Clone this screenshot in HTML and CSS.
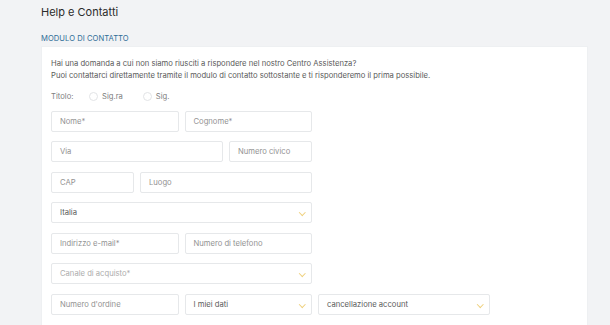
FILE: index.html
```html
<!DOCTYPE html>
<html lang="it">
<head>
<meta charset="utf-8">
<title>Help e Contatti</title>
<link rel="stylesheet" href="styles.css">
</head>
<body>
<main class="page">
  <h1 class="title">Help e Contatti</h1>
  <h2 class="section">MODULO DI CONTATTO</h2>
  <section class="card">
    <p class="intro">Hai una domanda a cui non siamo riusciti a rispondere nel nostro Centro Assistenza?<br>Puoi contattarci direttamente tramite il modulo di contatto sottostante e ti risponderemo il prima possibile.</p>
    <div class="salutation">
      <span class="sal-label">Titolo:</span>
      <label class="radio"><span class="circle"></span>Sig.ra</label>
      <label class="radio"><span class="circle"></span>Sig.</label>
    </div>
    <div class="form">
      <div class="row">
        <div class="field s3 ph">Nome*</div>
        <div class="field s3 ph">Cognome*</div>
      </div>
      <div class="row">
        <div class="field s4 ph">Via</div>
        <div class="field s2 ph">Numero civico</div>
      </div>
      <div class="row">
        <div class="field s2 ph">CAP</div>
        <div class="field s4 ph">Luogo</div>
      </div>
      <div class="row">
        <div class="field s6 select val">Italia<span class="chev"></span></div>
      </div>
      <div class="row">
        <div class="field s3 ph">Indirizzo e-mail*</div>
        <div class="field s3 ph">Numero di telefono</div>
      </div>
      <div class="row">
        <div class="field s6 select ph light">Canale di acquisto*<span class="chev"></span></div>
      </div>
      <div class="row">
        <div class="field s3 ph">Numero d'ordine</div>
        <div class="field s3 select val">I miei dati<span class="chev"></span></div>
        <div class="field s4 select val">cancellazione account<span class="chev"></span></div>
      </div>
      <div class="row">
        <div class="field s12 area"></div>
      </div>
    </div>
  </section>
</main>
</body>
</html>
```
FILE: styles.css
```css
* { box-sizing: border-box; }
html, body { margin: 0; padding: 0; }
body {
  background: #f2f3f5;
  font-family: Inter, "Noto Sans", "Liberation Sans", sans-serif;
  color: #333;
  height: 325px;
  overflow: hidden;
}
.page { padding: 0 22px 0 41px; }
.title {
  margin: 0;
  padding-top: 5px;
  font-size: 11px;
  font-weight: 400;
  line-height: 15px;
  color: #2b2b2b;
}
.section {
  margin: 14px 0 0;
  font-size: 7.6px;
  line-height: 10px;
  font-weight: 400;
  color: #2f6d97;
  letter-spacing: 0.05px;
}
.card {
  margin-top: 2px;
  width: 547px;
  background: #fff;
  border: 1px solid #eef0f2;
  padding: 11px 10px 0 9px;
  height: 300px;
}
.intro {
  margin: 0;
  font-size: 7.65px;
  line-height: 11.5px;
  color: #5a5a5a;
}
.salutation {
  display: flex;
  align-items: center;
  margin-top: 9px;
  height: 12px;
  font-size: 7.65px;
  color: #808080;
}
.sal-label { width: 38px; }
.radio { display: flex; align-items: center; margin-right: 20px; }
.circle {
  width: 9px; height: 9px;
  border: 1px solid #e2e4e6;
  border-radius: 50%;
  margin-right: 4px;
}
.form {
  margin-top: 8.5px;
  width: 528px;
  display: flex;
  flex-direction: column;
  gap: 9.6px;
}
.row {
  display: grid;
  grid-template-columns: repeat(12, 1fr);
  column-gap: 6px;
}
.field {
  position: relative;
  height: 21px;
  border: 1px solid #e6e8ea;
  border-radius: 2px;
  padding: 0 8px;
  display: flex;
  align-items: center;
  font-size: 7.65px;
}
.ph { color: #929292; }
.ph.light { color: #adadad; }
.val { color: #5a5a5a; }
.s2 { grid-column: span 2; }
.s3 { grid-column: span 3; }
.s4 { grid-column: span 4; }
.s6 { grid-column: span 6; }
.s12 { grid-column: span 12; }
.area { height: 40px; }
.chev {
  position: absolute;
  right: 7px;
  top: 7px;
  width: 4.5px;
  height: 4.5px;
  border-right: 1.1px solid #efd07c;
  border-bottom: 1.1px solid #efd07c;
  transform: rotate(45deg);
}
```
